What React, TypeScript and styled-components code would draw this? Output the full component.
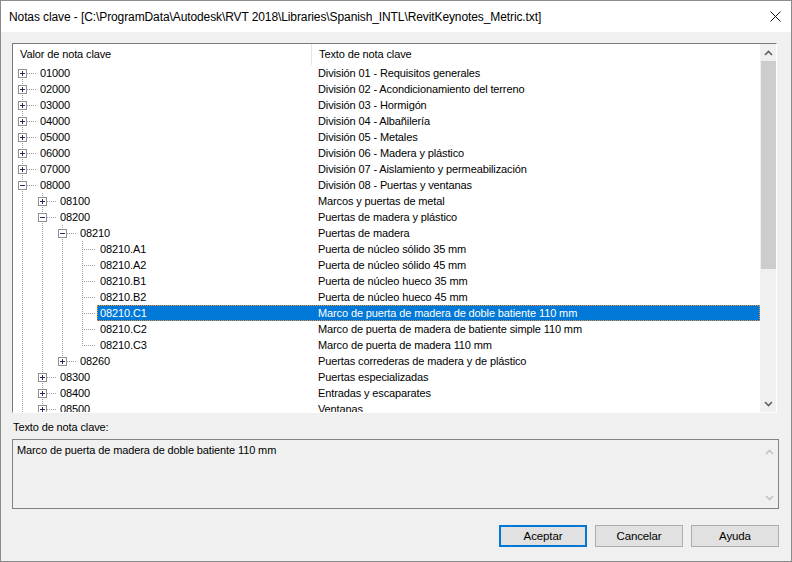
import React from "react";
import styled, { createGlobalStyle, css } from "styled-components";

const GlobalStyle = createGlobalStyle`
  html, body { margin: 0; padding: 0; background: #f0f0f0; }
  * { box-sizing: border-box; }
`;

const UI_FONT = `"Liberation Sans", Arial, sans-serif`;

/* ---------- keynote data ---------- */

type Node = {
  key: string;
  text: string;
  children?: Node[];
  open?: boolean;
  /** further siblings follow this node further down the (scrolled) list */
  more?: boolean;
};

const leaf = (key: string, text: string): Node => ({ key, text });
const closed = (key: string, text: string, more = false): Node => ({ key, text, children: [], more });

const KEYNOTES: Node[] = [
  closed("01000", "División 01 - Requisitos generales"),
  closed("02000", "División 02 - Acondicionamiento del terreno"),
  closed("03000", "División 03 - Hormigón"),
  closed("04000", "División 04 - Albañilería"),
  closed("05000", "División 05 - Metales"),
  closed("06000", "División 06 - Madera y plástico"),
  closed("07000", "División 07 - Aislamiento y permeabilización"),
  {
    key: "08000",
    text: "División 08 - Puertas y ventanas",
    open: true,
    more: true,
    children: [
      closed("08100", "Marcos y puertas de metal"),
      {
        key: "08200",
        text: "Puertas de madera y plástico",
        open: true,
        children: [
          {
            key: "08210",
            text: "Puertas de madera",
            open: true,
            children: [
              leaf("08210.A1", "Puerta de núcleo sólido 35 mm"),
              leaf("08210.A2", "Puerta de núcleo sólido 45 mm"),
              leaf("08210.B1", "Puerta de núcleo hueco 35 mm"),
              leaf("08210.B2", "Puerta de núcleo hueco 45 mm"),
              leaf("08210.C1", "Marco de puerta de madera de doble batiente 110 mm"),
              leaf("08210.C2", "Marco de puerta de madera de batiente simple 110 mm"),
              leaf("08210.C3", "Marco de puerta de madera 110 mm"),
            ],
          },
          closed("08260", "Puertas correderas de madera y de plástico"),
        ],
      },
      closed("08300", "Puertas especializadas"),
      closed("08400", "Entradas y escaparates"),
      closed("08500", "Ventanas", true),
    ],
  },
];

const SELECTED = "08210.C1";

type Row = {
  node: Node;
  level: number;
  guides: boolean[]; // ancestors that still have siblings below
  hasNext: boolean;
  isFirstRoot: boolean;
};

function flatten(nodes: Node[], level = 0, guides: boolean[] = []): Row[] {
  const out: Row[] = [];
  nodes.forEach((node, i) => {
    const hasNext = i < nodes.length - 1 || !!node.more;
    out.push({ node, level, guides, hasNext, isFirstRoot: level === 0 && i === 0 });
    if (node.children && node.open) {
      out.push(...flatten(node.children, level + 1, [...guides, hasNext]));
    }
  });
  return out;
}

const ROWS = flatten(KEYNOTES);

/* ---------- window chrome ---------- */

const Window = styled.div`
  width: 792px;
  height: 562px;
  border: 1px solid #8c8c8c;
  display: flex;
  flex-direction: column;
  background: #f0f0f0;
  font-family: ${UI_FONT};
  font-size: 11px;
  letter-spacing: -0.12px;
  color: #000;
  overflow: hidden;
`;

const TitleBar = styled.div`
  height: 31px;
  flex: none;
  background: #fff;
  display: flex;
  align-items: center;
  justify-content: space-between;
  padding-left: 8px;
`;

const TitleText = styled.span`
  font-size: 12px;
  letter-spacing: -0.1px;
  white-space: nowrap;
  padding-top: 1px;
`;

const CloseButton = styled.div`
  width: 32px;
  height: 31px;
  display: flex;
  align-items: center;
  justify-content: center;
`;

const Body = styled.div`
  flex: 1;
  display: flex;
  flex-direction: column;
  padding: 11px 12px 14px 11px;
`;

/* ---------- tree list ---------- */

const TreeBox = styled.div`
  height: 370px;
  margin-right: 2px;
  flex: none;
  border: 1px solid;
  border-color: #7a7a7a #ffffff #ffffff #7a7a7a;
  background: #fff;
  display: grid;
  grid-template-columns: 1fr 16px;
  overflow: hidden;
`;

const TreeContent = styled.div`
  display: flex;
  flex-direction: column;
  overflow: hidden;
`;

const Header = styled.div`
  height: 21px;
  flex: none;
  display: flex;
`;

const HeaderCell = styled.div<{ $width?: number }>`
  ${(p) => (p.$width ? css`width: ${p.$width}px;` : css`flex: 1;`)}
  height: 21px;
  line-height: 21px;
  padding-left: 7px;
  border-right: 1px solid #e5e5e5;
  white-space: nowrap;
  &:last-child { border-right: none; }
`;

const Row = styled.div`
  height: 16px;
  flex: none;
  display: flex;
`;

const Item = styled.div<{ $selected: boolean }>`
  flex: 1;
  display: flex;
  height: 16px;
  line-height: 14px;
  border: 1px solid transparent;
  ${(p) =>
    p.$selected &&
    css`
      background: #0078d7;
      color: #fff;
      border: 1px dotted #f3922d;
    `}
`;

const KeyLabel = styled.div<{ $width: number }>`
  width: ${(p) => p.$width}px;
  padding-left: 2px;
  white-space: nowrap;
  flex: none;
`;

const TextCell = styled.div`
  flex: 1;
  padding-left: 6px;
  white-space: nowrap;
`;

const ScrollBar = styled.div`
  background: #f0f0f0;
  display: flex;
  flex-direction: column;
  border-left: 1px solid #f0f0f0;
`;

const ScrollArrow = styled.div`
  height: 17px;
  flex: none;
  display: flex;
  align-items: center;
  justify-content: center;
`;

const ScrollTrack = styled.div`
  flex: 1;
  display: flex;
  flex-direction: column;
`;

const ScrollThumb = styled.div`
  height: 208px;
  background: #cdcdcd;
`;

/* ---------- detail text ---------- */

const FieldLabel = styled.div`
  margin-top: 7px;
  height: 14px;
  line-height: 14px;
  padding-left: 1px;
`;

const DetailBox = styled.div`
  margin-top: 5px;
  height: 70px;
  flex: none;
  border: 1px solid #828282;
  background: #f0f0f0;
  display: grid;
  grid-template-columns: 1fr 17px;
`;

const DetailText = styled.div`
  padding: 3px 4px;
  line-height: 15px;
`;

const DetailScroll = styled.div`
  display: flex;
  flex-direction: column;
  justify-content: space-between;
  padding: 3px 0 2px;
`;

/* ---------- buttons ---------- */

const ButtonRow = styled.div`
  margin-top: 16px;
  display: flex;
  justify-content: flex-end;
  gap: 8px;
`;

const Button = styled.div<{ $default?: boolean }>`
  width: 88px;
  height: 22px;
  display: flex;
  align-items: center;
  justify-content: center;
  background: #e1e1e1;
  border: 1px solid #adadad;
  font-size: 11.5px;
  ${(p) =>
    p.$default &&
    css`
      border: 2px solid #0078d7;
    `}
`;

/* ---------- drawings ---------- */

const LINE = "#a0a0a0";

function Chevron({ up, color }: { up: boolean; color: string }) {
  return (
    <svg width="9" height="6" viewBox="0 0 9 6">
      <path
        d={up ? "M1 5 L4.5 1.5 L8 5" : "M1 1 L4.5 4.5 L8 1"}
        fill="none"
        stroke={color}
        strokeWidth="1.6"
      />
    </svg>
  );
}

function CloseGlyph() {
  return (
    <svg width="11" height="11" viewBox="0 0 11 11">
      <path d="M0.5 0.5 L10.5 10.5 M10.5 0.5 L0.5 10.5" stroke="#111" strokeWidth="1" />
    </svg>
  );
}

const gutterWidth = (level: number) => 24 + level * 20;

function TreeGutter({ row }: { row: Row }) {
  const { level, guides, hasNext, isFirstRoot, node } = row;
  const w = gutterWidth(level);
  const cx = 9 + level * 20;
  const hasBox = !!node.children;
  const dash = { stroke: LINE, strokeDasharray: "1 1", strokeWidth: 1, fill: "none" } as const;

  return (
    <svg width={w} height="16" viewBox={`0 0 ${w} 16`} shapeRendering="crispEdges" style={{ flex: "none" }}>
      {guides.map((g, a) =>
        g ? <line key={a} x1={9 + a * 20 + 0.5} y1="0" x2={9 + a * 20 + 0.5} y2="16" {...dash} /> : null
      )}
      <line x1={cx + 0.5} y1={isFirstRoot ? 8 : 0} x2={cx + 0.5} y2={hasNext ? 16 : 9} {...dash} />
      <line x1={hasBox ? cx + 5 : cx + 2} y1="8.5" x2={w - 1} y2="8.5" {...dash} />
      {hasBox && (
        <g>
          <rect x={cx - 4 + 0.5} y="4.5" width="8" height="8" fill="#fff" stroke="#919191" />
          <line x1={cx - 2} y1="8.5" x2={cx + 3} y2="8.5" stroke="#2a2a60" />
          {!node.open && <line x1={cx + 0.5} y1="6" x2={cx + 0.5} y2="11" stroke="#2a2a60" />}
        </g>
      )}
    </svg>
  );
}

const KEY_COLUMN = 299;

export default function App() {
  return (
    <>
      <GlobalStyle />
      <Window>
        <TitleBar>
          <TitleText>
            Notas clave - [C:\ProgramData\Autodesk\RVT 2018\Libraries\Spanish_INTL\RevitKeynotes_Metric.txt]
          </TitleText>
          <CloseButton>
            <CloseGlyph />
          </CloseButton>
        </TitleBar>
        <Body>
          <TreeBox>
            <TreeContent>
              <Header>
                <HeaderCell $width={KEY_COLUMN}>Valor de nota clave</HeaderCell>
                <HeaderCell>Texto de nota clave</HeaderCell>
              </Header>
              {ROWS.map((row) => {
                const g = gutterWidth(row.level);
                return (
                  <Row key={row.node.key}>
                    <TreeGutter row={row} />
                    <Item $selected={row.node.key === SELECTED}>
                      <KeyLabel $width={KEY_COLUMN - g - 1}>{row.node.key}</KeyLabel>
                      <TextCell>{row.node.text}</TextCell>
                    </Item>
                  </Row>
                );
              })}
            </TreeContent>
            <ScrollBar>
              <ScrollArrow>
                <Chevron up color="#606060" />
              </ScrollArrow>
              <ScrollTrack>
                <ScrollThumb />
              </ScrollTrack>
              <ScrollArrow>
                <Chevron up={false} color="#606060" />
              </ScrollArrow>
            </ScrollBar>
          </TreeBox>

          <FieldLabel>Texto de nota clave:</FieldLabel>
          <DetailBox>
            <DetailText>Marco de puerta de madera de doble batiente 110 mm</DetailText>
            <DetailScroll>
              <ScrollArrow>
                <Chevron up color="#c2c2c2" />
              </ScrollArrow>
              <ScrollArrow>
                <Chevron up={false} color="#c2c2c2" />
              </ScrollArrow>
            </DetailScroll>
          </DetailBox>

          <ButtonRow>
            <Button $default>Aceptar</Button>
            <Button>Cancelar</Button>
            <Button>Ayuda</Button>
          </ButtonRow>
        </Body>
      </Window>
    </>
  );
}
